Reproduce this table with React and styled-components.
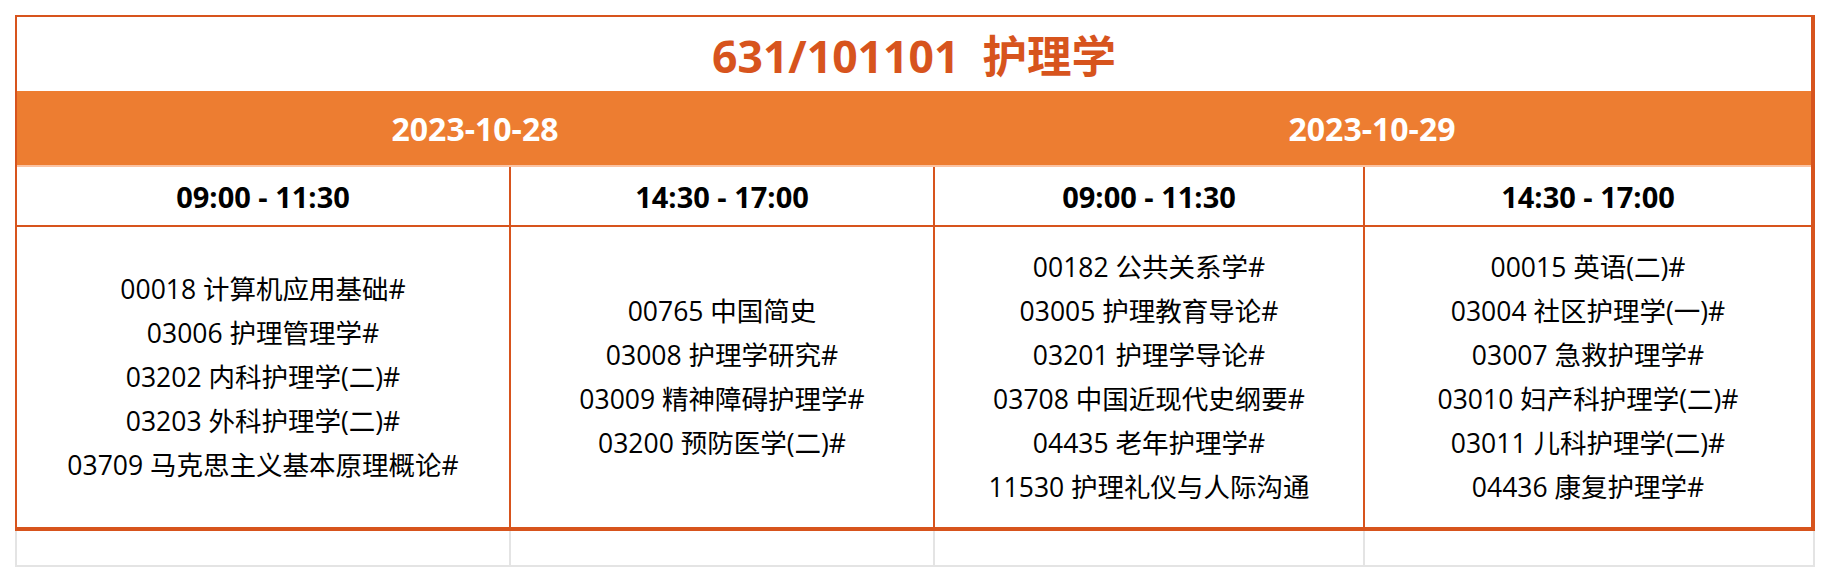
import React from "react"
import styled, { createGlobalStyle } from "styled-components"

const ORANGE = "#d7541d"
const BAND = "#ed7d31"
const GRAY = "#e4e4e4"

const GlobalStyle = createGlobalStyle`
  html, body {
    margin: 0;
    padding: 0;
    background: #fff;
  }
  body {
    font-family: "Open Sans", "Noto Sans CJK SC", sans-serif;
    color: #000;
  }
`

const days = [
  {
    date: "2023-10-28",
    sessions: [
      {
        time: "09:00 - 11:30",
        courses: [
          "00018 计算机应用基础#",
          "03006 护理管理学#",
          "03202 内科护理学(二)#",
          "03203 外科护理学(二)#",
          "03709 马克思主义基本原理概论#",
        ],
      },
      {
        time: "14:30 - 17:00",
        courses: [
          "00765 中国简史",
          "03008 护理学研究#",
          "03009 精神障碍护理学#",
          "03200 预防医学(二)#",
        ],
      },
    ],
  },
  {
    date: "2023-10-29",
    sessions: [
      {
        time: "09:00 - 11:30",
        courses: [
          "00182 公共关系学#",
          "03005 护理教育导论#",
          "03201 护理学导论#",
          "03708 中国近现代史纲要#",
          "04435 老年护理学#",
          "11530 护理礼仪与人际沟通",
        ],
      },
      {
        time: "14:30 - 17:00",
        courses: [
          "00015 英语(二)#",
          "03004 社区护理学(一)#",
          "03007 急救护理学#",
          "03010 妇产科护理学(二)#",
          "03011 儿科护理学(二)#",
          "04436 康复护理学#",
        ],
      },
    ],
  },
]

const sessions = days.flatMap((d) => d.sessions)

const App = () => {
  return (
    <Page>
      <GlobalStyle />
      <Board>
        <Highlight>
          <Title>631/101101&nbsp; 护理学</Title>
          {days.map((d) => (
            <DateCell key={d.date}>{d.date}</DateCell>
          ))}
          {sessions.map((s, i) => (
            <TimeCell key={"t" + i} $first={i === 0}>
              {s.time}
            </TimeCell>
          ))}
          {sessions.map((s, i) => (
            <CourseCell key={"c" + i} $first={i === 0}>
              {s.courses.map((c) => (
                <Course key={c}>{c}</Course>
              ))}
            </CourseCell>
          ))}
        </Highlight>
        <EmptyRow>
          {sessions.map((s, i) => (
            <EmptyCell key={"e" + i} $first={i === 0} />
          ))}
        </EmptyRow>
      </Board>
    </Page>
  )
}

export default App

const Page = styled.div`
  padding: 15px;
`

const Board = styled.div`
  width: 1800px;
`

const Highlight = styled.div`
  display: grid;
  grid-template-columns: 492px 424px 430px 448px;
  border-top: 2px solid ${ORANGE};
  border-left: 2px solid ${ORANGE};
  border-right: 4px solid ${ORANGE};
  border-bottom: 4px solid ${ORANGE};
`

const Title = styled.div`
  grid-column: 1 / -1;
  height: 74px;
  display: flex;
  align-items: center;
  justify-content: center;
  font-size: 44.5px;
  font-weight: 700;
  color: ${ORANGE};
  padding-bottom: 2px;
  box-sizing: border-box;
`

const DateCell = styled.div`
  grid-column: span 2;
  height: 76px;
  box-sizing: border-box;
  background: ${BAND};
  border-bottom: 2px solid #fbc3a3;
  display: flex;
  align-items: center;
  justify-content: center;
  color: #fff;
  font-size: 32px;
  font-weight: 700;
`

const TimeCell = styled.div`
  height: 60px;
  box-sizing: border-box;
  border-bottom: 2px solid ${ORANGE};
  border-left: ${({ $first }) => ($first ? "none" : `2px solid ${ORANGE}`)};
  display: flex;
  align-items: center;
  justify-content: center;
  font-size: 29px;
  font-weight: 700;
`

const CourseCell = styled.div`
  height: 300px;
  box-sizing: border-box;
  border-left: ${({ $first }) => ($first ? "none" : `2px solid ${ORANGE}`)};
  display: flex;
  flex-direction: column;
  align-items: center;
  justify-content: center;
`

const Course = styled.div`
  font-size: 26.5px;
  line-height: 44px;
  white-space: nowrap;
`

const EmptyRow = styled.div`
  display: grid;
  grid-template-columns: 492px 424px 430px 450px;
  border-left: 2px solid ${GRAY};
  border-right: 2px solid ${GRAY};
  border-bottom: 2px solid ${GRAY};
`

const EmptyCell = styled.div`
  height: 34px;
  border-left: ${({ $first }) => ($first ? "none" : `2px solid ${GRAY}`)};
`
